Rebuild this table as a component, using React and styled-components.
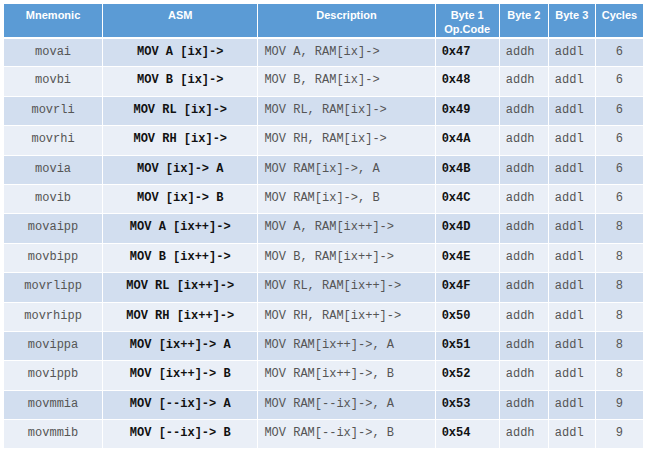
import React from 'react';
import styled, { createGlobalStyle } from 'styled-components';

const Global = createGlobalStyle`
  body {
    margin: 0;
    background: #fff;
  }
`;

const rows = [
  ['movai', 'MOV A [ix]->', 'MOV A, RAM[ix]->', '0x47', 6],
  ['movbi', 'MOV B [ix]->', 'MOV B, RAM[ix]->', '0x48', 6],
  ['movrli', 'MOV RL [ix]->', 'MOV RL, RAM[ix]->', '0x49', 6],
  ['movrhi', 'MOV RH [ix]->', 'MOV RH, RAM[ix]->', '0x4A', 6],
  ['movia', 'MOV [ix]-> A', 'MOV RAM[ix]->, A', '0x4B', 6],
  ['movib', 'MOV [ix]-> B', 'MOV RAM[ix]->, B', '0x4C', 6],
  ['movaipp', 'MOV A [ix++]->', 'MOV A, RAM[ix++]->', '0x4D', 8],
  ['movbipp', 'MOV B [ix++]->', 'MOV B, RAM[ix++]->', '0x4E', 8],
  ['movrlipp', 'MOV RL [ix++]->', 'MOV RL, RAM[ix++]->', '0x4F', 8],
  ['movrhipp', 'MOV RH [ix++]->', 'MOV RH, RAM[ix++]->', '0x50', 8],
  ['movippa', 'MOV [ix++]-> A', 'MOV RAM[ix++]->, A', '0x51', 8],
  ['movippb', 'MOV [ix++]-> B', 'MOV RAM[ix++]->, B', '0x52', 8],
  ['movmmia', 'MOV [--ix]-> A', 'MOV RAM[--ix]->, A', '0x53', 9],
  ['movmmib', 'MOV [--ix]-> B', 'MOV RAM[--ix]->, B', '0x54', 9],
];

const widths = [99, 155, 177, 64, 49, 47, 48];

const Wrap = styled.div`
  padding: 3px 0 0 3px;
`;

const Table = styled.table`
  border-collapse: collapse;
  table-layout: fixed;
  width: 641px;
`;

const Th = styled.th`
  background: #5b9bd5;
  color: #fff;
  font-family: "Liberation Sans", Arial, sans-serif;
  font-weight: bold;
  font-size: 11px;
  line-height: 14px;
  height: 34px;
  padding: 4px 2px 0;
  vertical-align: top;
  text-align: center;
  border: 1px solid #fff;
  border-bottom-width: 2px;
  box-sizing: border-box;
`;

const Row = styled.tr`
  background: ${p => (p.$odd ? '#d2deef' : '#eaeff7')};
  height: 29.4px;
`;

const Td = styled.td`
  font-family: "Liberation Mono", "Courier New", monospace;
  font-size: 12px;
  line-height: 14px;
  font-weight: ${p => (p.$bold ? 'bold' : 'normal')};
  color: ${p => (p.$bold ? '#111' : '#555')};
  text-align: ${p => p.$align || 'left'};
  padding: 6px 6px 0;
  vertical-align: top;
  white-space: pre;
  border: 1px solid #fff;
  box-sizing: border-box;
`;

export default function App() {
  return (
    <Wrap>
      <Global />
      <Table>
        <colgroup>
          {widths.map((w, i) => (
            <col key={i} style={{ width: w }} />
          ))}
        </colgroup>
        <thead>
          <tr>
            <Th>Mnemonic</Th>
            <Th>ASM</Th>
            <Th>Description</Th>
            <Th>Byte 1<br />Op.Code</Th>
            <Th>Byte 2</Th>
            <Th>Byte 3</Th>
            <Th>Cycles</Th>
          </tr>
        </thead>
        <tbody>
          {rows.map((r, i) => (
            <Row key={r[0]} $odd={i % 2 === 0}>
              <Td $align="center">{r[0]}</Td>
              <Td $align="center" $bold>{r[1]}</Td>
              <Td>{r[2]}</Td>
              <Td $bold>{r[3]}</Td>
              <Td>addh</Td>
              <Td>addl</Td>
              <Td $align="center">{r[4]}</Td>
            </Row>
          ))}
        </tbody>
      </Table>
    </Wrap>
  );
}
